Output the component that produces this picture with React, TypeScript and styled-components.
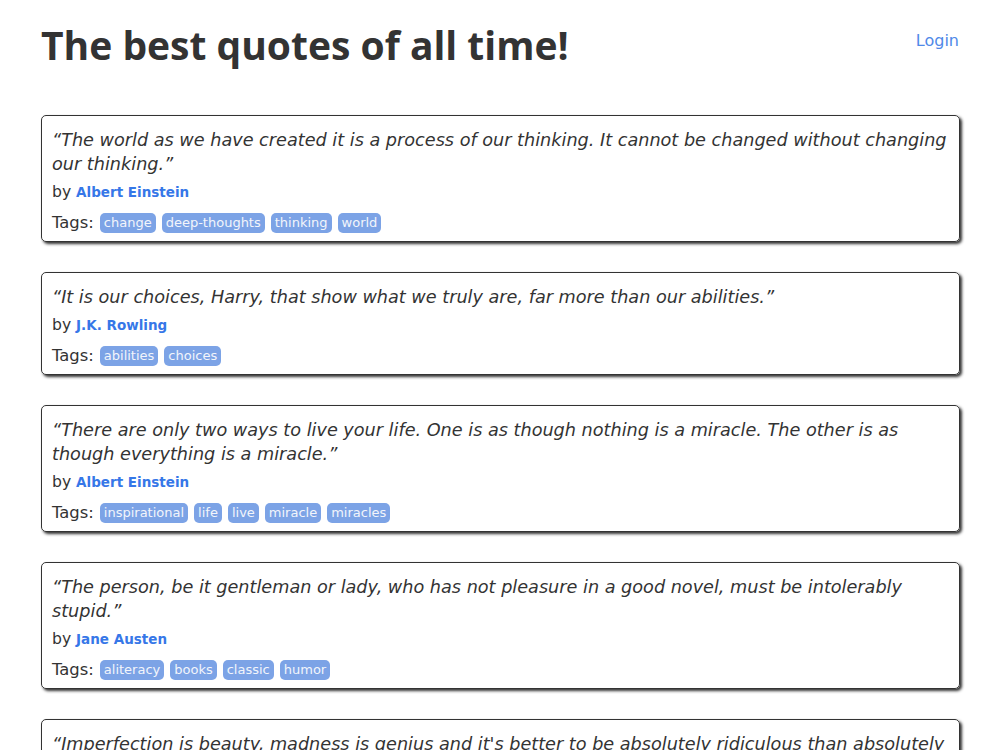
import React from "react";
import styled, { createGlobalStyle } from "styled-components";

const Global = createGlobalStyle`
  html, body { margin: 0; padding: 0; background: #fff; }
  body { font-family: "DejaVu Sans", Verdana, sans-serif; color: #333; font-size: 14px; line-height: 20px; }
`;

const Page = styled.div`
  padding: 0 40px 0 41px;
`;

const Header = styled.header`
  display: flex;
  justify-content: space-between;
  align-items: flex-start;
  padding-top: 20px;
  margin-bottom: 45px;
`;

const Title = styled.h1`
  margin: 0;
  font-family: "Open Sans", "Lato", sans-serif;
  font-weight: 700;
  font-size: 39px;
  line-height: 50px;
  color: #333;
`;

const LoginLink = styled.a`
  font-size: 16px;
  color: #5089e8;
  text-decoration: none;
  margin-top: 11px;
  margin-right: 1px;
`;

const Quote = styled.div`
  border: 1px solid #333;
  border-radius: 5px;
  box-shadow: 2px 2px 3px #333;
  padding: 12px 10px 8px;
  margin-bottom: 30px;
`;

const Text = styled.span`
  display: block;
  font-style: italic;
  font-size: 17.65px;
  line-height: 24px;
  margin-bottom: 6px;
  color: #333;
`;

const ByLine = styled.div`
  font-size: 15.6px;
  line-height: 20px;
`;

const Author = styled.small`
  font-size: 13.5px;
  font-weight: 700;
  color: #3677e8;
`;

const Tags = styled.div`
  display: flex;
  align-items: center;
  flex-wrap: wrap;
  gap: 6px;
  margin-top: 10px;
  font-size: 16.4px;
  line-height: 21px;
`;

const TagLabel = styled.span`
  margin-right: 0;
`;

const Tag = styled.a`
  display: inline-block;
  background: #7ca3e6;
  color: #f2f5fb;
  border-radius: 5px;
  padding: 0 4px;
  font-size: 13px;
  line-height: 20px;
  text-decoration: none;
`;

const quotes = [
  {
    text: "“The world as we have created it is a process of our thinking. It cannot be changed without changing our thinking.”",
    author: "Albert Einstein",
    tags: ["change", "deep-thoughts", "thinking", "world"],
  },
  {
    text: "“It is our choices, Harry, that show what we truly are, far more than our abilities.”",
    author: "J.K. Rowling",
    tags: ["abilities", "choices"],
  },
  {
    text: "“There are only two ways to live your life. One is as though nothing is a miracle. The other is as though everything is a miracle.”",
    author: "Albert Einstein",
    tags: ["inspirational", "life", "live", "miracle", "miracles"],
  },
  {
    text: "“The person, be it gentleman or lady, who has not pleasure in a good novel, must be intolerably stupid.”",
    author: "Jane Austen",
    tags: ["aliteracy", "books", "classic", "humor"],
  },
  {
    text: "“Imperfection is beauty, madness is genius and it's better to be absolutely ridiculous than absolutely boring.”",
    author: "Marilyn Monroe",
    tags: ["be-yourself", "inspirational"],
  },
];

export default function App() {
  return (
    <>
      <Global />
      <Page>
        <Header>
          <Title>The best quotes of all time!</Title>
          <LoginLink href="#">Login</LoginLink>
        </Header>
        {quotes.map((q, i) => (
          <Quote key={i}>
            <Text>{q.text}</Text>
            <ByLine>
              by <Author>{q.author}</Author>
            </ByLine>
            <Tags>
              <TagLabel>Tags:</TagLabel>
              {q.tags.map((t) => (
                <Tag key={t} href="#">{t}</Tag>
              ))}
            </Tags>
          </Quote>
        ))}
      </Page>
    </>
  );
}
